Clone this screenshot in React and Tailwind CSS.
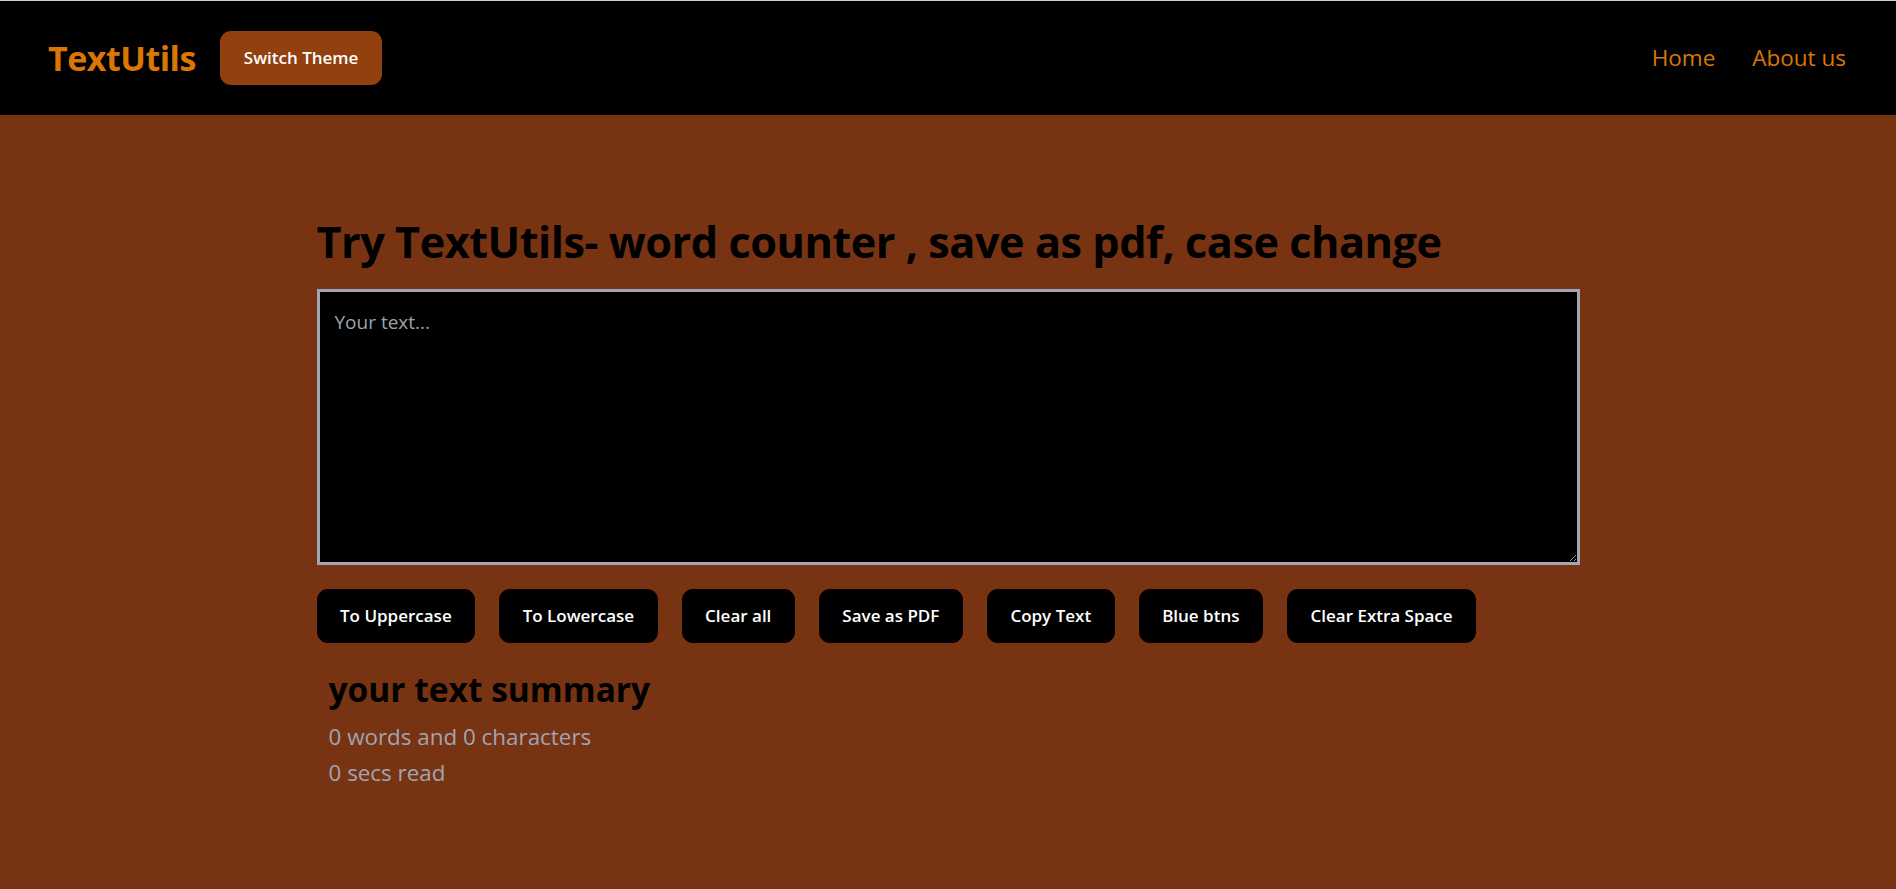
import React, { useState } from "react";

const actions = [
  "To Uppercase",
  "To Lowercase",
  "Clear all",
  "Save as PDF",
  "Copy Text",
  "Blue btns",
  "Clear Extra Space",
];

const App = () => {
  const [text, setText] = useState("");
  const words = text.split(/\s+/).filter((w) => w.length > 0).length;

  return (
    <div className="min-h-screen bg-[#783412] font-['Open_Sans',sans-serif]">
      <header className="h-[115px] bg-black border-t border-[#cfcfcf] flex items-center justify-between pl-[48px] pr-[50px]">
        <div className="flex items-center">
          <h1 className="text-[34px] font-bold text-[#d97706] tracking-[-0.5px]">TextUtils</h1>
          <button className="ml-[24px] h-[54px] px-[24px] rounded-[11px] bg-[#92400e] text-white text-[17px] font-semibold">
            Switch Theme
          </button>
        </div>
        <nav className="flex items-center gap-[37px] text-[22.5px] text-[#d97706]">
          <a href="#">Home</a>
          <a href="#">About us</a>
        </nav>
      </header>

      <main className="w-[1263px] mx-auto pt-[100px] pb-10">
        <h2 className="text-[43.3px] leading-[53px] font-bold text-black tracking-[-0.5px]">
          Try TextUtils- word counter , save as pdf, case change
        </h2>
        <textarea
          value={text}
          onChange={(e) => setText(e.target.value)}
          placeholder="Your text..."
          className="mt-[21px] block w-full h-[276px] bg-black border-[3px] border-[#a1a6b4] px-[15px] py-[16px] text-[19px] text-white placeholder:text-[#9ca3af] outline-none"
        />
        <div className="mt-[24px] flex gap-[24px]">
          {actions.map((label) => (
            <button
              key={label}
              className="h-[54px] px-[23.5px] rounded-[11px] bg-black text-white text-[17px] font-semibold"
            >
              {label}
            </button>
          ))}
        </div>
        <div className="px-[12px] mt-[25px]">
          <h3 className="text-[33.5px] leading-[42px] font-bold text-black">your text summary</h3>
          <p className="mt-[9px] text-[22.4px] leading-[36px] text-[#a0a4b4]">
            {words} words and {text.length} characters
          </p>
          <p className="text-[22.4px] leading-[36px] text-[#a0a4b4]">
            {Math.round(words * 0.48)} secs read
          </p>
        </div>
      </main>
    </div>
  );
};

export default App;
